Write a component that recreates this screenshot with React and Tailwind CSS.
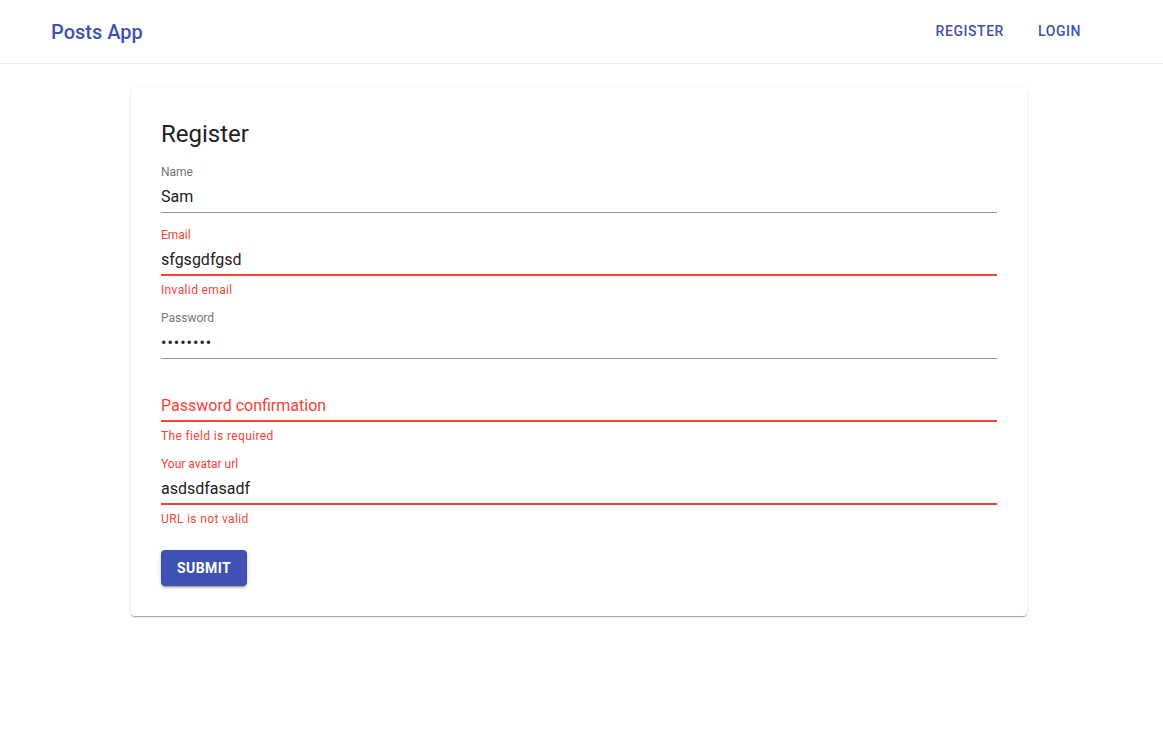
import React from "react";

const FONT = { fontFamily: "Roboto, 'Liberation Sans', sans-serif" };

function Field({ label, value, error, helper, password, placeholder }) {
  const line = error ? "border-b-2 border-[#f44336]" : "border-b border-[#949494]";
  return (
    <div className={helper ? "mb-[11px]" : "mb-[15px]"}>
      <div className="relative h-[48px]">
        {placeholder ? (
          <div className={`absolute left-0 top-[20px] text-[16px] leading-[23px] ${error ? "text-[#f44336]" : "text-[#757575]"}`}>
            {label}
          </div>
        ) : (
          <div className={`text-[12px] leading-[14px] ${error ? "text-[#f44336]" : "text-[#757575]"}`}>{label}</div>
        )}
        <div className={`absolute left-0 right-0 bottom-0 h-[32px] ${line}`}>
          <div className={`pt-[4px] text-[16px] leading-[23px] text-[#212121] ${password ? "tracking-[1px]" : ""}`}>
            {value}
          </div>
        </div>
      </div>
      {helper && <div className="mt-[4px] text-[12px] leading-[20px] text-[#f44336] tracking-[0.03em]">{helper}</div>}
    </div>
  );
}

export default function App() {
  return (
    <div className="min-h-screen bg-white" style={FONT}>
      <header className="h-[64px] border-b border-[#eeeeee] flex items-center justify-between pl-[51px] pr-[74px]">
        <div className="text-[20px] font-medium text-[#3f51b5]">Posts App</div>
        <nav className="flex items-center gap-[18px] text-[14px] font-medium tracking-[0.04em] text-[#3f51b5]">
          <button className="px-[8px] py-[6px]">REGISTER</button>
          <button className="px-[8px] py-[6px]">LOGIN</button>
        </nav>
      </header>

      <div className="pl-[131px] pt-[24px]">
        <div className="w-[896px] flex flex-col items-stretch bg-white rounded-[4px] p-[30px] shadow-[0_2px_1px_-1px_rgba(0,0,0,0.2),0_1px_1px_0_rgba(0,0,0,0.14),0_1px_3px_0_rgba(0,0,0,0.12)]">
          <h1 className="text-[24px] leading-[32px] text-[#212121] mb-[15px]">Register</h1>
          <Field label="Name" value="Sam" />
          <Field label="Email" value="sfgsgdfgsd" error helper="Invalid email" />
          <Field label="Password" value="••••••••" password />
          <Field label="Password confirmation" error placeholder helper="The field is required" />
          <Field label="Your avatar url" value="asdsdfasadf" error helper="URL is not valid" />
          <div>
            <button className="mt-[10px] h-[36px] px-[16px] rounded-[4px] bg-[#3f51b5] text-white text-[14px] font-bold tracking-[0.03em] shadow-[0_3px_1px_-2px_rgba(0,0,0,0.2),0_2px_2px_0_rgba(0,0,0,0.14),0_1px_5px_0_rgba(0,0,0,0.12)]">
              SUBMIT
            </button>
          </div>
        </div>
      </div>
    </div>
  );
}
